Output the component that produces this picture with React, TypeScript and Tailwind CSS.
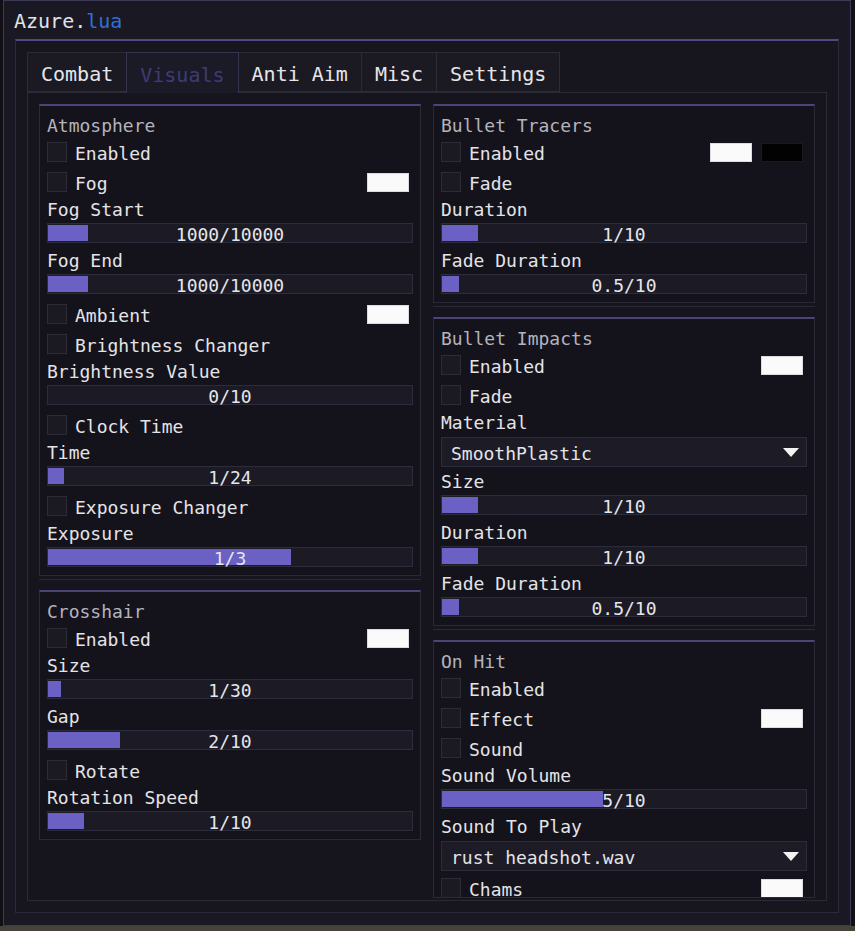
import React from 'react';

type Item =
  | { t: 'check'; label: string; swatches?: string[] }
  | { t: 'label'; label: string }
  | { t: 'slider'; value: string; fill: number }
  | { t: 'combo'; value: string };

type GroupData = { title: string; items: Item[] };

const leftGroups: GroupData[] = [
  {
    title: 'Atmosphere',
    items: [
      { t: 'check', label: 'Enabled' },
      { t: 'check', label: 'Fog', swatches: ['white'] },
      { t: 'label', label: 'Fog Start' },
      { t: 'slider', value: '1000/10000', fill: 40 },
      { t: 'label', label: 'Fog End' },
      { t: 'slider', value: '1000/10000', fill: 40 },
      { t: 'check', label: 'Ambient', swatches: ['white'] },
      { t: 'check', label: 'Brightness Changer' },
      { t: 'label', label: 'Brightness Value' },
      { t: 'slider', value: '0/10', fill: 0 },
      { t: 'check', label: 'Clock Time' },
      { t: 'label', label: 'Time' },
      { t: 'slider', value: '1/24', fill: 16 },
      { t: 'check', label: 'Exposure Changer' },
      { t: 'label', label: 'Exposure' },
      { t: 'slider', value: '1/3', fill: 243 },
    ],
  },
  {
    title: 'Crosshair',
    items: [
      { t: 'check', label: 'Enabled', swatches: ['white'] },
      { t: 'label', label: 'Size' },
      { t: 'slider', value: '1/30', fill: 13 },
      { t: 'label', label: 'Gap' },
      { t: 'slider', value: '2/10', fill: 72 },
      { t: 'check', label: 'Rotate' },
      { t: 'label', label: 'Rotation Speed' },
      { t: 'slider', value: '1/10', fill: 36 },
    ],
  },
];

const rightGroups: GroupData[] = [
  {
    title: 'Bullet Tracers',
    items: [
      { t: 'check', label: 'Enabled', swatches: ['white', 'black'] },
      { t: 'check', label: 'Fade' },
      { t: 'label', label: 'Duration' },
      { t: 'slider', value: '1/10', fill: 36 },
      { t: 'label', label: 'Fade Duration' },
      { t: 'slider', value: '0.5/10', fill: 17 },
    ],
  },
  {
    title: 'Bullet Impacts',
    items: [
      { t: 'check', label: 'Enabled', swatches: ['white'] },
      { t: 'check', label: 'Fade' },
      { t: 'label', label: 'Material' },
      { t: 'combo', value: 'SmoothPlastic' },
      { t: 'label', label: 'Size' },
      { t: 'slider', value: '1/10', fill: 36 },
      { t: 'label', label: 'Duration' },
      { t: 'slider', value: '1/10', fill: 36 },
      { t: 'label', label: 'Fade Duration' },
      { t: 'slider', value: '0.5/10', fill: 17 },
    ],
  },
  {
    title: 'On Hit',
    items: [
      { t: 'check', label: 'Enabled' },
      { t: 'check', label: 'Effect', swatches: ['white'] },
      { t: 'check', label: 'Sound' },
      { t: 'label', label: 'Sound Volume' },
      { t: 'slider', value: '5/10', fill: 161 },
      { t: 'label', label: 'Sound To Play' },
      { t: 'combo', value: 'rust headshot.wav' },
      { t: 'check', label: 'Chams', swatches: ['white'] },
    ],
  },
];

const tabs = ['Combat', 'Visuals', 'Anti Aim', 'Misc', 'Settings'];

function Row({ item }: { item: Item }) {
  if (item.t === 'check') {
    return (
      <div className="flex items-center h-[30px] shrink-0">
        <div className="w-5 h-5 bg-[#1b1a23] border border-[#2c2b37]" />
        <span className="ml-2 pt-[2px] text-[#e4e4e8]">{item.label}</span>
        {item.swatches && (
          <div className="ml-auto mr-[4px] flex gap-[9px]">
            {item.swatches.map((s, i) => (
              <div
                key={i}
                className={
                  s === 'white'
                    ? 'w-[42px] h-[19px] bg-[#fafafa] border border-[#dcdcdc]'
                    : 'w-[42px] h-[19px] bg-[#020202] border border-[#1a1a1a]'
                }
              />
            ))}
          </div>
        )}
      </div>
    );
  }
  if (item.t === 'label') {
    return <div className="h-[22px] pt-[3px] leading-[19px] shrink-0 text-[#e4e4e8]">{item.label}</div>;
  }
  if (item.t === 'slider') {
    return (
      <div className="pt-1 pb-[5px] shrink-0">
        <div className="relative h-5 bg-[#1b1a25] border border-[#2d2c3a]">
          {item.fill > 0 && (
            <div className="absolute left-0 top-[1px] bottom-[1px] bg-[#6b60c3]" style={{ width: item.fill }} />
          )}
          <span className="absolute inset-0 pt-[3px] flex items-center justify-center leading-none text-[#e6e6ea]">
            {item.value}
          </span>
        </div>
      </div>
    );
  }
  return (
    <div className="pt-[5px] pb-[2px] shrink-0">
      <div className="h-[30px] flex items-center pl-[9px] pr-[7px] bg-[#1c1b26] border border-[#2d2c3a]">
        <span className="pt-[3px] text-[#e4e4e8]">{item.value}</span>
        <svg className="ml-auto" width="16" height="9" viewBox="0 0 16 9">
          <path d="M0 0 H16 L8 9 Z" fill="#f2f2f2" />
        </svg>
      </div>
    </div>
  );
}

function Group({ group, last }: { group: GroupData; last: boolean }) {
  return (
    <>
      <div className="shrink-0 border border-[#2a2936] border-t-2 border-t-[#4a4579] bg-[#14131b] pt-[6px] px-[7px] pb-[3px]">
        <div className="h-[25px] pt-[2px] leading-[23px] text-[#b4b3bd]">{group.title}</div>
        {group.items.map((it, i) => (
          <Row key={i} item={it} />
        ))}
      </div>
      {!last && <div className="shrink-0 mt-[3px] mb-[10px] h-px bg-[#2a2936]" />}
    </>
  );
}

function Column({ groups, clipped }: { groups: GroupData[]; clipped?: boolean }) {
  return (
    <div
      className={
        clipped
          ? 'flex-1 min-w-0 h-full flex flex-col overflow-hidden border-b border-[#2a2936]'
          : 'flex-1 min-w-0 h-full flex flex-col overflow-hidden'
      }
    >
      {groups.map((g, i) => (
        <Group key={g.title} group={g} last={i === groups.length - 1} />
      ))}
    </div>
  );
}

export default function App() {
  return (
    <div className="w-[855px] h-[931px] flex flex-col bg-[#111017] font-['DejaVu_Sans_Mono',monospace] text-[18px]">
      <div className="ml-[3px] w-[848px] h-[926px] shrink-0 flex flex-col bg-[#1a1923] border border-[#3d3a58] px-[11px] pb-[12px]">
        <div className="h-[38px] shrink-0 pt-[3px] leading-[35px] text-[20px] text-[#e2e2e6] -ml-px">
          Azure.<span className="text-[#2f6fd3]">lua</span>
        </div>
        <div className="flex-1 min-h-0 flex flex-col bg-[#17161e] border border-[#2b2a37] border-t-2 border-t-[#4f4a82] pt-[11px] px-[11px] pb-[11px]">
          <div className="flex h-[40px] shrink-0 text-[20px]">
            {tabs.map((t, i) => (
              <div
                key={t}
                className={
                  t === 'Visuals'
                    ? 'h-[41px] -ml-px px-[13px] pt-[3px] flex items-center bg-[#1b1a27] border border-b-0 border-[#36344c] text-[#3e3c72] relative z-10'
                    : i === 0
                      ? 'h-[40px] px-[13px] pt-[3px] flex items-center bg-[#1b1a23] border border-[#2c2b38] text-[#e6e6ea]'
                      : 'h-[40px] -ml-px px-[13px] pt-[3px] flex items-center bg-[#1b1a23] border border-[#2c2b38] text-[#e6e6ea]'
                }
              >
                {t}
              </div>
            ))}
          </div>
          <div className="flex-1 min-h-0 flex gap-[12px] bg-[#16151d] border border-[#2b2a37] pt-[11px] px-[11px] pb-[2px] overflow-hidden">
            <Column groups={leftGroups} />
            <Column groups={rightGroups} clipped />
          </div>
        </div>
      </div>
      <div className="flex-1 bg-[#46443a]" />
    </div>
  );
}
